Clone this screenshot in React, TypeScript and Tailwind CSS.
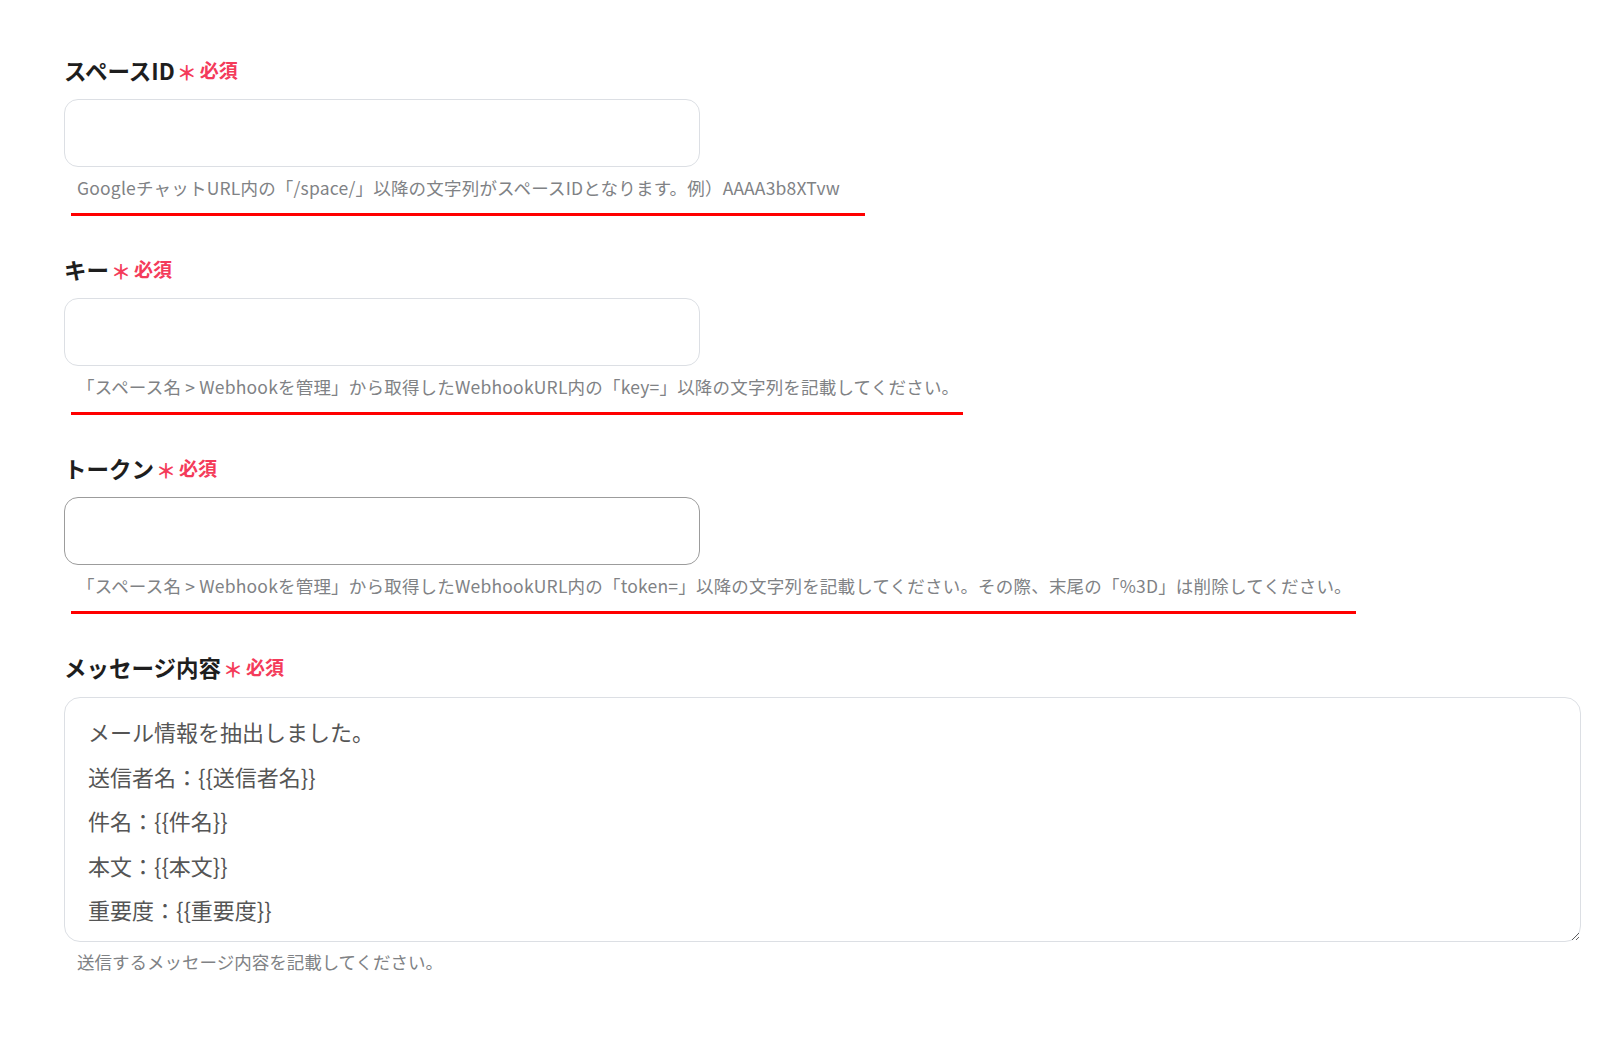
import React from "react";

const font = { fontFamily: '"Noto Sans CJK JP", "Noto Sans", sans-serif' };

function Label({ text }: { text: string }) {
  return (
    <div className="flex items-center h-[30px] leading-[30px]">
      <span className="text-[22.5px] font-bold text-[#1e1e1e]">{text}</span>
      <span className="ml-[2px] translate-y-[3px] text-[20px] font-bold text-[#f43b5a] leading-none">＊</span>
      <span className="ml-[3px] text-[19px] font-bold text-[#f43b5a]">必須</span>
    </div>
  );
}

function Field({
  label,
  help,
  lineWidth,
  dark,
}: {
  label: string;
  help: string;
  lineWidth: string;
  dark?: boolean;
}) {
  return (
    <div className="flex flex-col">
      <Label text={label} />
      <div
        className={
          dark
            ? "mt-[14px] w-[636px] h-[68px] rounded-[14px] border border-[#9c9c9c] bg-white"
            : "mt-[14px] w-[636px] h-[68px] rounded-[14px] border border-[#dcdfe4] bg-white"
        }
      />
      <div className="mt-[8px] pl-[13px] h-[26px] leading-[26px] text-[17.5px] text-[#808285] tracking-[0.2px] whitespace-nowrap">
        {help}
      </div>
      <div className={"mt-[12px] ml-[7px] h-[3px] bg-[#ff0000] " + lineWidth} />
    </div>
  );
}

export default function App() {
  return (
    <div className="min-h-[1041px] w-[1600px] bg-white pl-[64px] pt-[55px]" style={font}>
      <div className="flex flex-col gap-[38px]">
        <Field
          label="スペースID"
          help="GoogleチャットURL内の「/space/」以降の文字列がスペースIDとなります。例）AAAA3b8XTvw"
          lineWidth="w-[794px]"
        />
        <Field
          label="キー"
          help="「スペース名 > Webhookを管理」から取得したWebhookURL内の「key=」以降の文字列を記載してください。"
          lineWidth="w-[892px]"
        />
        <Field
          label="トークン"
          help="「スペース名 > Webhookを管理」から取得したWebhookURL内の「token=」以降の文字列を記載してください。その際、末尾の「%3D」は削除してください。"
          lineWidth="w-[1285px]"
          dark
        />
        <div className="flex flex-col">
          <Label text="メッセージ内容" />
          <textarea
            readOnly
            className="mt-[15px] w-[1517px] h-[245px] rounded-[16px] border border-[#dcdfe4] bg-white px-[23px] pt-[11px] text-[22px] leading-[44.5px] text-[#555555] outline-none resize-y"
            style={font}
            defaultValue={
              "メール情報を抽出しました。\n送信者名：{{送信者名}}\n件名：{{件名}}\n本文：{{本文}}\n重要度：{{重要度}}"
            }
          />
          <div className="mt-[7px] pl-[13px] h-[26px] leading-[26px] text-[17.5px] text-[#808285] whitespace-nowrap">
            送信するメッセージ内容を記載してください。
          </div>
        </div>
      </div>
    </div>
  );
}
